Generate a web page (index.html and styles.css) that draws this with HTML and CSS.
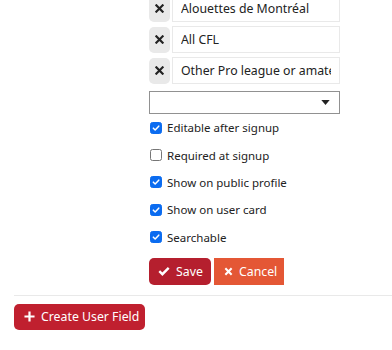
FILE: index.html
```html
<!DOCTYPE html>
<html>
<head>
<meta charset="utf-8">
<link rel="stylesheet" href="styles.css">
</head>
<body>
<div class="page">
  <div class="form">
    <div class="options">
      <div class="opt-row">
        <button class="remove" type="button"><svg viewBox="0 0 10 10" width="9" height="9"><path d="M1.5 1.5L8.5 8.5M8.5 1.5L1.5 8.5" stroke="#222" stroke-width="2.4" stroke-linecap="square"/></svg></button>
        <input class="opt-input" type="text" value="Alouettes de Montréal">
      </div>
      <div class="opt-row">
        <button class="remove" type="button"><svg viewBox="0 0 10 10" width="9" height="9"><path d="M1.5 1.5L8.5 8.5M8.5 1.5L1.5 8.5" stroke="#222" stroke-width="2.4" stroke-linecap="square"/></svg></button>
        <input class="opt-input" type="text" value="All CFL">
      </div>
      <div class="opt-row">
        <button class="remove" type="button"><svg viewBox="0 0 10 10" width="9" height="9"><path d="M1.5 1.5L8.5 8.5M8.5 1.5L1.5 8.5" stroke="#222" stroke-width="2.4" stroke-linecap="square"/></svg></button>
        <input class="opt-input" type="text" value="Other Pro league or amateur">
      </div>
    </div>
    <div class="select">
      <svg class="caret" viewBox="0 0 10 6" width="9" height="5"><path d="M0 0H10L5 6Z" fill="#222"/></svg>
    </div>
    <ul class="checks">
      <li><span class="cb on"><svg viewBox="0 0 12 12" width="12" height="12"><path d="M2.8 6.2L5 8.4L9.3 3.8" fill="none" stroke="#fff" stroke-width="1.8" stroke-linecap="round" stroke-linejoin="round"/></svg></span>Editable after signup</li>
      <li><span class="cb"></span>Required at signup</li>
      <li><span class="cb on"><svg viewBox="0 0 12 12" width="12" height="12"><path d="M2.8 6.2L5 8.4L9.3 3.8" fill="none" stroke="#fff" stroke-width="1.8" stroke-linecap="round" stroke-linejoin="round"/></svg></span>Show on public profile</li>
      <li><span class="cb on"><svg viewBox="0 0 12 12" width="12" height="12"><path d="M2.8 6.2L5 8.4L9.3 3.8" fill="none" stroke="#fff" stroke-width="1.8" stroke-linecap="round" stroke-linejoin="round"/></svg></span>Show on user card</li>
      <li><span class="cb on"><svg viewBox="0 0 12 12" width="12" height="12"><path d="M2.8 6.2L5 8.4L9.3 3.8" fill="none" stroke="#fff" stroke-width="1.8" stroke-linecap="round" stroke-linejoin="round"/></svg></span>Searchable</li>
    </ul>
    <div class="actions">
      <button class="btn save" type="button"><svg viewBox="0 0 12 10" width="12" height="10"><path d="M1.3 5.2L4.4 8.2L10.7 1.8" fill="none" stroke="#fff" stroke-width="2.4"/></svg>Save</button>
      <button class="btn cancel" type="button"><svg viewBox="0 0 10 10" width="9" height="9"><path d="M1.5 1.5L8.5 8.5M8.5 1.5L1.5 8.5" stroke="#fff" stroke-width="2.3"/></svg>Cancel</button>
    </div>
  </div>
  <hr class="sep">
  <div class="footer">
    <button class="btn create" type="button"><svg viewBox="0 0 12 12" width="11" height="11"><path d="M6 0.5V11.5M0.5 6H11.5" stroke="#fff" stroke-width="2.4"/></svg>Create User Field</button>
  </div>
</div>
</body>
</html>
```
FILE: styles.css
```css
* { box-sizing: border-box; }
html, body { margin: 0; padding: 0; background: #fff; }
body {
  font-family: "Noto Sans", "Open Sans", sans-serif;
  color: #222;
  font-size: 12px;
}
.page { width: 392px; height: 350px; overflow: hidden; }
.form {
  margin-left: 149px;
  width: 191px;
  margin-top: -5px;
}
.options { display: flex; flex-direction: column; gap: 4px; }
.opt-row { display: flex; align-items: center; gap: 2px; height: 27px; }
.remove {
  width: 21px; height: 26px;
  border: 0; border-radius: 5px;
  background: #e9e9e9;
  display: flex; align-items: center; justify-content: center;
  padding: 0; flex: none;
}
.opt-input {
  flex: 1; min-width: 0;
  height: 27px;
  border: 1px solid #e9e9e9;
  padding: 0 8px;
  font-family: inherit; font-size: 12.3px; color: #222;
  background: #fff;
  outline: none;
}
.select {
  margin-top: 7px;
  height: 23px;
  border: 1px solid #919191;
  display: flex; align-items: center; justify-content: flex-end;
  padding-right: 9px;
}
.caret { flex: none; }
.checks { list-style: none; margin: 0; padding: 0; }
.checks li {
  display: flex; align-items: center;
  height: 27.4px;
  font-size: 11.5px;
}
.cb {
  width: 12px; height: 12px;
  border: 1px solid #767676; border-radius: 2.5px;
  margin: 0 5px 0 1px;
  display: flex; align-items: center; justify-content: center;
  background: #fff; flex: none;
}
.cb.on { background: #0b6cf0; border-color: #0b6cf0; }
.actions { display: flex; gap: 3px; margin-top: 7px; }
.btn {
  display: inline-flex; align-items: center; gap: 6px;
  border: 0; color: #fff;
  font-family: inherit; font-size: 12.3px;
  height: 27px; padding: 0 9px;
  white-space: nowrap;
}
.btn svg { flex: none; }
.save { background: #b51f2e; border-radius: 5px; width: 62px; }
.cancel { background: #e45735; border-radius: 0; width: 70px; padding-left: 10px; }
.sep { border: 0; border-top: 1px solid #e9e9e9; margin: 10px 0 0 14px; }
.footer { padding: 8px 0 0 14px; }
.create {
  background: #c0202f; border-radius: 5px;
  height: 26px; width: 131px; padding: 0 10px;
}
```
